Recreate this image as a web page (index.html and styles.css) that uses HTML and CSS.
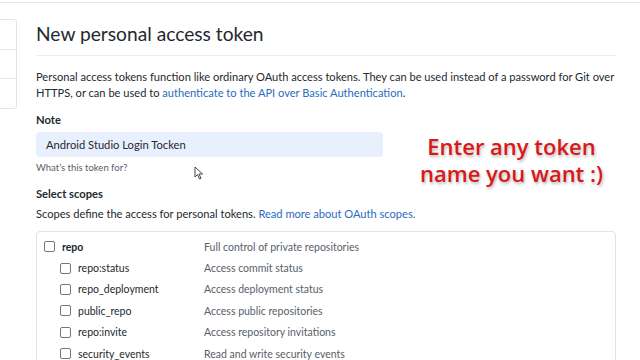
FILE: index.html
```html
<!DOCTYPE html>
<html>
<head>
<meta charset="utf-8">
<link rel="stylesheet" href="styles.css">
</head>
<body>
<div class="topline"></div>
<div class="page">
  <div class="sidebar">
    <div class="side-item"></div>
    <div class="side-item"></div>
    <div class="side-item"></div>
  </div>
  <div class="main">
    <h1 class="title">New personal access token</h1>
    <p class="intro">Personal access tokens function like ordinary OAuth access tokens. They can be used instead of a password for Git over HTTPS, or can be used to <a class="link">authenticate to the API over Basic Authentication</a>.</p>
    <div class="row-note">
      <div class="note-col">
        <div class="label">Note</div>
        <div class="input">Android Studio Login Tocken</div>
        <div class="hint">What’s this token for?</div>
        <div class="label scopes-label">Select scopes</div>
      </div>
      <div class="callout">Enter any token<br>name you want :)</div>
    </div>
    <p class="scopes-desc">Scopes define the access for personal tokens. <a class="link">Read more about OAuth scopes.</a></p>
    <div class="scopes">
      <div class="scope main-scope"><span class="name"><span class="cb"></span><b>repo</b></span><span class="desc">Full control of private repositories</span></div>
      <div class="scope sub"><span class="name"><span class="cb"></span>repo:status</span><span class="desc">Access commit status</span></div>
      <div class="scope sub"><span class="name"><span class="cb"></span>repo_deployment</span><span class="desc">Access deployment status</span></div>
      <div class="scope sub"><span class="name"><span class="cb"></span>public_repo</span><span class="desc">Access public repositories</span></div>
      <div class="scope sub"><span class="name"><span class="cb"></span>repo:invite</span><span class="desc">Access repository invitations</span></div>
      <div class="scope sub"><span class="name"><span class="cb"></span>security_events</span><span class="desc">Read and write security events</span></div>
    </div>
  </div>
</div>
<svg class="cursor" width="10" height="14" viewBox="0 0 10 14"><path d="M1 1 L1 11 L3.5 8.5 L5.5 13 L7 12.3 L5 8 L8.5 8 Z" fill="#fff" stroke="#333" stroke-width="0.9"/></svg>
</body>
</html>
```
FILE: styles.css
```css
html, body { margin: 0; padding: 0; background: #fff; }
body { font-family: Lato, "Open Sans", sans-serif; color: #24292e; width: 640px; height: 360px; overflow: hidden; position: relative; }
.topline { height: 2px; border-bottom: 1px solid #e6e6e6; }
.page { display: flex; padding-top: 16px; }
.sidebar { width: 16px; height: 88px; border: 1px solid #e1e4e8; border-left: none; border-radius: 0 4px 4px 0; margin-right: 19px; display: flex; flex-direction: column; }
.side-item { flex: 1; border-bottom: 1px solid #e8eaed; }
.side-item:last-child { border-bottom: none; }
.main { width: 580px; }
.title { font-weight: 400; font-size: 19.2px; margin: 2px 0 0; padding-bottom: 8px; border-bottom: 1px solid #eaecef; line-height: 26px; }
.intro { font-size: 11.1px; line-height: 16px; margin: 13px 0 0; }
.link { color: #2a6cc0; }
.row-note { display: flex; }
.note-col { width: 347px; }
.label { font-weight: 700; font-size: 11.2px; margin-top: 11px; line-height: 16px; }
.input { margin-top: 4px; height: 25px; background: #e8f0fe; border-radius: 4px; font-size: 11.2px; line-height: 25px; padding-left: 10px; box-sizing: border-box; }
.hint { font-size: 9.5px; color: #586069; margin-top: 4px; line-height: 14px; }
.scopes-label { margin-top: 11px; }
.callout { flex: 1; text-align: center; color: #d8191a; font-family: "Open Sans", sans-serif; font-size: 22px; font-weight: 600; line-height: 27px; margin-top: 32px; padding-left: 24px; text-shadow: 1px 2px 3px rgba(0,0,0,0.28); }
.scopes-desc { font-size: 11.1px; margin: 4px 0 0; line-height: 16px; }
.scopes { margin-top: 9px; border: 1px solid #e1e4e8; border-radius: 4px; padding: 4px 0 0 7px; }
.scope { display: flex; align-items: center; height: 21.4px; font-size: 10.5px; }
.name { width: 160px; display: flex; align-items: center; }
.sub .name { padding-left: 16px; width: 144px; }
.cb { width: 9px; height: 9px; border: 1px solid #767676; border-radius: 2px; margin-right: 7px; background: #fff; }
.desc { color: #586069; }
.cursor { position: absolute; left: 194px; top: 166px; }
```
